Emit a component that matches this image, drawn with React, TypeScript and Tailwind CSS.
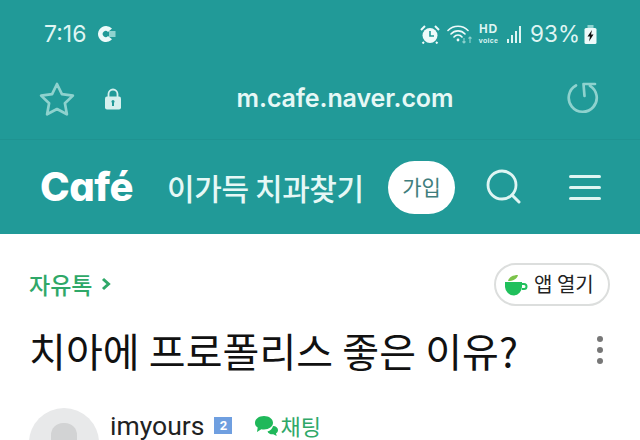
export default function App() {
  const sans = "font-['Inter','Noto_Sans_CJK_KR',sans-serif]";
  const kr = "font-['Noto_Sans_CJK_KR',sans-serif]";
  return (
    <div className="w-[640px] h-[440px] overflow-hidden bg-white font-['Roboto','Noto_Sans_CJK_KR',sans-serif]">
      <div className="h-[234px] bg-[#219a98] flex flex-col">
        <div className="h-[68px] flex items-center pl-[44px] pr-[43px] text-[#dff5f3]">
          <span className={`${sans} text-[23px] leading-none mr-[10px]`}>7:16</span>
          <svg width="20" height="18" viewBox="0 0 20 18">
            <path d="M9 1a8 8 0 1 0 6 13.300L11 11a3 3 0 1 1 0-4l4-3.500A8 8 0 0 0 9 1z" fill="#eefafa" />
            <rect x="12" y="6" width="6.500" height="6" fill="#8fd3cf" />
          </svg>
          <div className="ml-auto flex items-center">
            <svg width="20" height="19" viewBox="0 0 20 19" className="mr-[7px]">
              <circle cx="10" cy="10.500" r="7.500" fill="#eefafa" />
              <path d="M10 6v5h4" fill="none" stroke="#219a98" strokeWidth="1.600" />
              <path d="M1 5l4-4M19 5l-4-4M4 17l-1.500 1.500M16 17l1.500 1.500" stroke="#eefafa" strokeWidth="2" />
            </svg>
            <svg width="27" height="20" viewBox="0 0 27 20">
              <path d="M1 6.500a14 14 0 0 1 20 0M4 10a9.500 9.500 0 0 1 14 0M7 13a5 5 0 0 1 8 0" fill="none" stroke="#eefafa" strokeWidth="1.600" strokeLinecap="round" />
              <circle cx="11" cy="16" r="1.400" fill="#eefafa" />
              <path d="M17 14v5M15.500 17.500l1.500 1.500 1.500-1.500M23 19v-6M21.500 14.500l1.500-1.500 1.500 1.500" fill="none" stroke="#8fd3cf" strokeWidth="1.100" />
            </svg>
            <div className="ml-[4px] w-[21px] flex flex-col items-center gap-[3px] text-[#dff5f3] font-['Liberation_Sans',sans-serif] font-bold">
              <span className="text-[12px] leading-[11px] tracking-[1px]">HD</span>
              <span className="text-[7px] leading-[6px] tracking-[0.3px]">voice</span>
            </div>
            <div className="ml-[8px] flex items-end gap-[2px] h-[17px]">
              <div className="w-[2px] h-[4px] bg-[#dff5f3]" />
              <div className="w-[2px] h-[8px] bg-[#dff5f3]" />
              <div className="w-[2px] h-[12px] bg-[#dff5f3]" />
              <div className="w-[2px] h-[17px] bg-[#dff5f3]" />
            </div>
            <span className={`${sans} ml-[9px] text-[22.500px] leading-none`}>93%</span>
            <svg width="13" height="19" viewBox="0 0 13 19" className="ml-[4px]">
              <rect x="3.500" y="0" width="6" height="3" fill="#8fd3cf" />
              <rect x="0.500" y="3" width="12" height="16" rx="1.500" fill="#eefafa" />
              <path d="M8 5L3.500 11.500H6L5 16.500 9.500 9.500H7z" fill="#111" />
            </svg>
          </div>
        </div>
        <div className="h-[72px] flex items-center pb-[10px] border-b border-[#1f9391]">
          <svg width="38" height="36" viewBox="0 0 38 36" className="ml-[38px]">
            <path d="M19 3l4.900 10.100 11 1.500-8 7.700 2 11L19 28l-9.900 5.300 2-11-8-7.700 11-1.500z" fill="none" stroke="#8ed2ce" strokeWidth="2.700" strokeLinejoin="round" />
          </svg>
          <svg width="18" height="22" viewBox="0 0 18 22" className="ml-[28px]">
            <path d="M4.500 9V6a4.500 4.500 0 0 1 9 0v3" fill="none" stroke="#d6f0ee" strokeWidth="1.800" />
            <rect x="1" y="8.500" width="16" height="13" rx="2" fill="#d6f0ee" />
            <rect x="8" y="13" width="2" height="5" fill="#219a98" />
            <circle cx="9" cy="13.500" r="1.500" fill="#219a98" />
          </svg>
          <span className={`${sans} ml-[110px] font-semibold text-[25px] leading-none text-[#e6f8f6] w-[226px] text-center tracking-[-0.1px]`}>m.cafe.naver.com</span>
          <svg width="33" height="33" viewBox="0 0 33 33" className="ml-auto mr-[41px]">
            <path d="M10 3.500A14 14 0 1 0 24 3.800M17.500 2H29M17.500 2l1 12" fill="none" stroke="#8ed2ce" strokeWidth="2.700" strokeLinecap="round" />
          </svg>
        </div>
        <div className="flex-1 flex items-center">
          <span className="ml-[40px] w-[95px] font-['Inter',sans-serif] font-extrabold text-[40px] leading-none text-white tracking-[-0.5px] [font-feature-settings:'cv11']">Café</span>
          <span className={`${kr} ml-[32px] w-[196px] font-medium text-[30px] leading-none text-[#e6f8f6] tracking-[-0.4px] whitespace-nowrap`}>이가득 치과찾기</span>
          <div className={`${kr} ml-[25px] w-[67px] h-[53px] rounded-full bg-white flex items-center justify-center text-[#3f7e7d] text-[21px]`}>가입</div>
          <svg width="35" height="36" viewBox="0 0 35 36" className="ml-[31px]">
            <circle cx="16" cy="16" r="14" fill="none" stroke="#dff5f3" strokeWidth="2.800" />
            <path d="M26 26l7 7" stroke="#dff5f3" strokeWidth="3" strokeLinecap="round" />
          </svg>
          <div className="ml-[48px] w-[32px] flex flex-col gap-[8px]">
            <div className="h-[3px] rounded-full bg-[#dff5f3]" />
            <div className="h-[3px] rounded-full bg-[#dff5f3]" />
            <div className="h-[3px] rounded-full bg-[#dff5f3]" />
          </div>
        </div>
      </div>
      <div className="pl-[29px] pr-[30px]">
        <div className="h-[100px] flex items-center justify-between">
          <div className="flex items-center gap-[9px]">
            <span className={`${kr} text-[#2fa868] text-[23px] font-medium leading-none`}>자유톡</span>
            <svg width="10" height="14" viewBox="0 0 10 14"><path d="M2 2l5.500 5L2 12" fill="none" stroke="#2fa868" strokeWidth="3" /></svg>
          </div>
          <div className={`${kr} w-[116px] h-[43px] rounded-full border-2 border-[#dcdedd] flex items-center pl-[8px] text-[20px] text-[#222]`}>
            <svg width="24" height="24" viewBox="0 0 24 24" className="mr-[6px]">
              <path d="M4 9c1-4 5-6 10-6-1 4-5 6-10 6z" fill="#7cc34a" />
              <path d="M1 10h17v5a9 9 0 0 1-8 8.500A9 9 0 0 1 1 15z" fill="#20c05c" />
              <path d="M18 12h2a2 2 0 0 1 0 5h-2" fill="none" stroke="#20c05c" strokeWidth="2" />
            </svg>
            앱 열기
          </div>
        </div>
        <div className="h-[44px] -mt-[6px] flex items-center justify-between">
          <span className={`${kr} text-[40px] leading-none text-[#111] whitespace-nowrap tracking-[0.1px]`}>치아에 프로폴리스 좋은 이유?</span>
          <div className="flex flex-col gap-[5px] pr-[7px]">
            <div className="w-[6px] h-[6px] rounded-full bg-[#777]" />
            <div className="w-[6px] h-[6px] rounded-full bg-[#777]" />
            <div className="w-[6px] h-[6px] rounded-full bg-[#777]" />
          </div>
        </div>
        <div className="mt-[36px] flex items-start">
          <div className="w-[70px] h-[70px] rounded-full bg-[#e8e9ea] flex justify-center pt-[15px] shrink-0">
            <div className="w-[26px] h-[40px] rounded-[12px] bg-[#d2d3d4]" />
          </div>
          <span className="ml-[11px] mt-[3px] text-[26.500px] leading-[30px] text-[#222]">imyours</span>
          <div className="ml-[10px] mt-[9px] w-[18px] h-[17px] bg-[#6f9fe0] flex items-center justify-center text-white text-[13px] font-bold leading-none">2</div>
          <svg width="25" height="22" viewBox="0 0 25 22" className="ml-[22px] mt-[7px]">
            <path d="M19 11c3 0 5 2 5 4 0 1.500-.7 2.500-2 3.300l.7 2.700-3.400-1.800c-3 .3-5-1-5.800-2.800 2.800-.5 5-2.800 5.500-5.400z" fill="#1fb85a" />
            <path d="M10 1c5 0 9 2.900 9 6.800s-4 6.700-9 6.700c-1 0-1.800-.1-2.700-.3L3 17l.7-4.400C1.700 11.400 1 9.700 1 7.800 1 3.900 5 1 10 1z" fill="#1fb85a" />
          </svg>
          <span className={`${kr} ml-[1px] mt-[2px] text-[#2fa868] text-[22px] leading-[30px]`}>채팅</span>
        </div>
      </div>
    </div>
  );
}
